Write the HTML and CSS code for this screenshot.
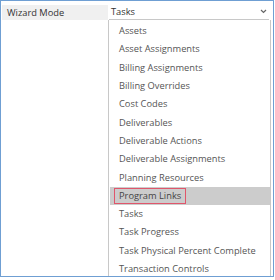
FILE: index.html
```html
<!DOCTYPE html>
<html lang="en">
<head>
    <meta charset="UTF-8">
    <title>Wizard Mode</title>
    <link rel="stylesheet" href="styles.css">
</head>
<body>
    <div class="frame">
        <div class="field">
            <div class="label">Wizard Mode</div>
            <div class="select">
                <span>Tasks</span>
                <svg class="chevron" width="7" height="5" viewBox="0 0 7 5">
                    <path d="M1 1 L3.5 3.5 L6 1" fill="none" stroke="#666" stroke-width="1.2"/>
                </svg>
            </div>
        </div>
        <div class="body">
            <div class="spacer"></div>
            <ul class="options">
                <li><span>Assets</span></li>
                <li><span>Asset Assignments</span></li>
                <li><span>Billing Assignments</span></li>
                <li><span>Billing Overrides</span></li>
                <li><span>Cost Codes</span></li>
                <li><span>Deliverables</span></li>
                <li><span>Deliverable Actions</span></li>
                <li><span>Deliverable Assignments</span></li>
                <li><span>Planning Resources</span></li>
                <li class="selected"><span>Program Links</span></li>
                <li><span>Tasks</span></li>
                <li><span>Task Progress</span></li>
                <li><span>Task Physical Percent Complete</span></li>
                <li><span>Transaction Controls</span></li>
            </ul>
        </div>
    </div>
</body>
</html>
```

FILE: styles.css
```css
body {
    margin: 0;
    font-family: "Open Sans", "Noto Sans", sans-serif;
    font-size: 9.3px;
    color: #555;
    background: #fff;
}

.frame {
    width: 272px;
    height: 275px;
    border: 1px solid #6f9fd3;
    overflow: hidden;
    display: flex;
    flex-direction: column;
}

.field {
    display: flex;
    height: 16px;
    margin-top: 3px;
    padding-left: 1px;
}

.label {
    width: 101px;
    background: #f0f0f0;
    color: #333;
    padding-left: 5px;
    line-height: 15px;
    margin-top: 1px;
}

.select {
    width: 158px;
    margin-left: 1px;
    padding-left: 2px;
    border-bottom: 1px solid #c8c8c8;
    display: flex;
    align-items: center;
    justify-content: space-between;
    color: #333;
    line-height: 15px;
}

.chevron {
    margin-right: 2px;
}

.body {
    display: flex;
    flex: 1;
}

.spacer {
    width: 107px;
    flex-shrink: 0;
}

.options {
    list-style: none;
    margin: 0;
    padding: 2px 0 0 1px;
    width: 160px;
    flex-shrink: 0;
    border-left: 1px solid #c8c8c8;
    border-right: 1px solid #c8c8c8;
}

.options li {
    height: 18.3px;
    padding-left: 4px;
    display: flex;
    align-items: center;
    white-space: nowrap;
}

.options span {
    padding: 0 4px;
    border: 1px solid transparent;
    line-height: 14px;
}

.options .selected {
    background: #cccccc;
}

.options .selected span {
    border-color: #e0566b;
    color: #444;
}
```
